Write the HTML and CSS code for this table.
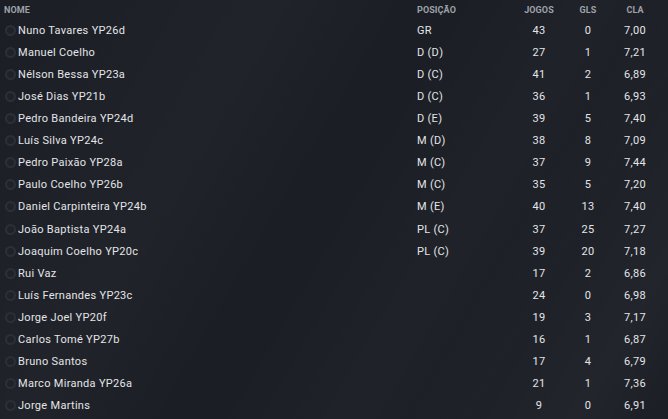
FILE: index.html
```html
<!DOCTYPE html>
<html>
    <head>
        <title>Plantel</title>
        <link rel="stylesheet" href="styles.css">
    </head>
    <body>
        <div class="squad">
            <div class="row head">
                <span class="name">Nome</span>
                <span>Posição</span>
                <span class="num">Jogos</span>
                <span class="num">Gls</span>
                <span class="num">Cla</span>
            </div>
            <div class="row"><span class="name"><i class="dot"></i>Nuno Tavares YP26d</span><span>GR</span><span class="num">43</span><span class="num">0</span><span class="num">7,00</span></div>
            <div class="row"><span class="name"><i class="dot"></i>Manuel Coelho</span><span>D (D)</span><span class="num">27</span><span class="num">1</span><span class="num">7,21</span></div>
            <div class="row"><span class="name"><i class="dot"></i>Nélson Bessa YP23a</span><span>D (C)</span><span class="num">41</span><span class="num">2</span><span class="num">6,89</span></div>
            <div class="row"><span class="name"><i class="dot"></i>José Dias YP21b</span><span>D (C)</span><span class="num">36</span><span class="num">1</span><span class="num">6,93</span></div>
            <div class="row"><span class="name"><i class="dot"></i>Pedro Bandeira YP24d</span><span>D (E)</span><span class="num">39</span><span class="num">5</span><span class="num">7,40</span></div>
            <div class="row"><span class="name"><i class="dot"></i>Luís Silva YP24c</span><span>M (D)</span><span class="num">38</span><span class="num">8</span><span class="num">7,09</span></div>
            <div class="row"><span class="name"><i class="dot"></i>Pedro Paixão YP28a</span><span>M (C)</span><span class="num">37</span><span class="num">9</span><span class="num">7,44</span></div>
            <div class="row"><span class="name"><i class="dot"></i>Paulo Coelho YP26b</span><span>M (C)</span><span class="num">35</span><span class="num">5</span><span class="num">7,20</span></div>
            <div class="row"><span class="name"><i class="dot"></i>Daniel Carpinteira YP24b</span><span>M (E)</span><span class="num">40</span><span class="num">13</span><span class="num">7,40</span></div>
            <div class="row"><span class="name"><i class="dot"></i>João Baptista YP24a</span><span>PL (C)</span><span class="num">37</span><span class="num">25</span><span class="num">7,27</span></div>
            <div class="row"><span class="name"><i class="dot"></i>Joaquim Coelho YP20c</span><span>PL (C)</span><span class="num">39</span><span class="num">20</span><span class="num">7,18</span></div>
            <div class="row"><span class="name"><i class="dot"></i>Rui Vaz</span><span></span><span class="num">17</span><span class="num">2</span><span class="num">6,86</span></div>
            <div class="row"><span class="name"><i class="dot"></i>Luís Fernandes YP23c</span><span></span><span class="num">24</span><span class="num">0</span><span class="num">6,98</span></div>
            <div class="row"><span class="name"><i class="dot"></i>Jorge Joel YP20f</span><span></span><span class="num">19</span><span class="num">3</span><span class="num">7,17</span></div>
            <div class="row"><span class="name"><i class="dot"></i>Carlos Tomé YP27b</span><span></span><span class="num">16</span><span class="num">1</span><span class="num">6,87</span></div>
            <div class="row"><span class="name"><i class="dot"></i>Bruno Santos</span><span></span><span class="num">17</span><span class="num">4</span><span class="num">6,79</span></div>
            <div class="row"><span class="name"><i class="dot"></i>Marco Miranda YP26a</span><span></span><span class="num">21</span><span class="num">1</span><span class="num">7,36</span></div>
            <div class="row"><span class="name"><i class="dot"></i>Jorge Martins</span><span></span><span class="num">9</span><span class="num">0</span><span class="num">6,91</span></div>
        </div>
    </body>
</html>
```

FILE: styles.css
```css
html, body {
    margin: 0;
    height: 100%;
}

body {
    background-color: #1b1e25;
    background-image:
        linear-gradient(120deg, transparent 0%, rgba(255, 255, 255, 0.025) 30%, transparent 45%),
        linear-gradient(120deg, transparent 50%, rgba(255, 255, 255, 0.02) 65%, transparent 80%),
        linear-gradient(120deg, transparent 70%, rgba(255, 255, 255, 0.03) 90%, transparent 100%);
    font-family: Roboto, "Liberation Sans", sans-serif;
    color: #e4e5e7;
    overflow: hidden;
}

.squad {
    width: 668px;
}

.row {
    display: grid;
    grid-template-columns: 417px 97px 50px 48px 46px;
    align-items: center;
    height: 22.12px;
    font-size: 11px;
    letter-spacing: 0.3px;
}

.head {
    height: 19px;
    font-size: 9px;
    font-weight: bold;
    text-transform: uppercase;
    color: #9ea2a8;
    letter-spacing: 0.1px;
}

.head .name {
    padding-left: 4px;
}

.name {
    display: flex;
    align-items: center;
    padding-left: 5px;
}

.num {
    text-align: center;
}

.dot {
    display: inline-block;
    box-sizing: border-box;
    width: 11px;
    height: 11px;
    border-radius: 50%;
    background: #1f2329;
    border: 2.5px solid #2c3037;
    margin-right: 2px;
}
```
